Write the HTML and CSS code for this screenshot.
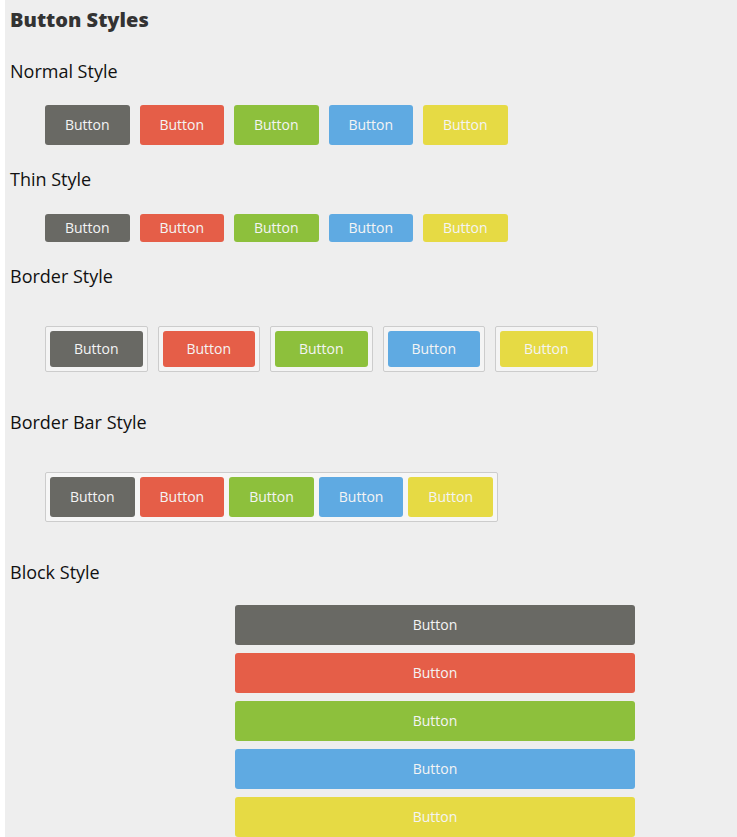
FILE: index.html
```html
<!DOCTYPE html>
<html>
<head>
<meta charset="utf-8">
<title>Button Styles</title>
<link rel="stylesheet" href="styles.css">
</head>
<body>
<div class="page">
  <h1 class="title">Button Styles</h1>

  <h2 class="section s-normal">Normal Style</h2>
  <div class="row row-normal">
    <a class="btn c-grey">Button</a>
    <a class="btn c-red">Button</a>
    <a class="btn c-green">Button</a>
    <a class="btn c-blue">Button</a>
    <a class="btn c-yellow">Button</a>
  </div>

  <h2 class="section s-thin">Thin Style</h2>
  <div class="row row-thin">
    <a class="btn thin c-grey">Button</a>
    <a class="btn thin c-red">Button</a>
    <a class="btn thin c-green">Button</a>
    <a class="btn thin c-blue">Button</a>
    <a class="btn thin c-yellow">Button</a>
  </div>

  <h2 class="section s-border">Border Style</h2>
  <div class="row row-border">
    <span class="frame"><a class="btn framed c-grey">Button</a></span>
    <span class="frame"><a class="btn framed c-red">Button</a></span>
    <span class="frame"><a class="btn framed c-green">Button</a></span>
    <span class="frame"><a class="btn framed c-blue">Button</a></span>
    <span class="frame"><a class="btn framed c-yellow">Button</a></span>
  </div>

  <h2 class="section s-bar">Border Bar Style</h2>
  <div class="bar">
    <a class="btn c-grey">Button</a>
    <a class="btn c-red">Button</a>
    <a class="btn c-green">Button</a>
    <a class="btn c-blue">Button</a>
    <a class="btn c-yellow">Button</a>
  </div>

  <h2 class="section s-block">Block Style</h2>
  <div class="blocks">
    <a class="btn block c-grey">Button</a>
    <a class="btn block c-red">Button</a>
    <a class="btn block c-green">Button</a>
    <a class="btn block c-blue">Button</a>
    <a class="btn block c-yellow">Button</a>
  </div>
</div>
</body>
</html>
```
FILE: styles.css
```css
html, body {
  margin: 0;
  padding: 0;
  background: #ffffff;
}

body {
  font-family: "Open Sans", "Liberation Sans", sans-serif;
}

.page {
  margin-left: 5px;
  padding: 7px 0 40px 5px;
  background: #eeeeee;
  min-height: 830px;
}

.title {
  margin: 0;
  font-size: 20px;
  line-height: 26px;
  font-weight: 800;
  color: #333333;
}

.section {
  margin: 0;
  font-size: 18px;
  line-height: 24px;
  font-weight: 400;
  color: #111111;
}

.s-normal { margin-top: 26px; }
.s-thin { margin-top: 22px; }
.s-border { margin-top: 22px; }
.s-bar { margin-top: 38px; }
.s-block { margin-top: 38px; }

.row {
  display: flex;
  margin-left: 35px;
}

.row-normal { margin-top: 22px; gap: 10px; }
.row-thin { margin-top: 23px; gap: 10px; }
.row-border { margin-top: 38px; gap: 10px; }

.btn {
  display: flex;
  align-items: center;
  justify-content: center;
  box-sizing: border-box;
  width: 84.5px;
  height: 40px;
  padding-bottom: 2px;
  border-radius: 3px;
  font-size: 14px;
  color: #f4f4f4;
  text-decoration: none;
}

.btn.thin { height: 28px; }

.frame {
  display: block;
  box-sizing: border-box;
  width: 102.5px;
  height: 46px;
  padding: 4px;
  border: 1px solid #cccccc;
  border-radius: 2px;
  background: #f4f4f4;
}

.btn.framed {
  width: 100%;
  height: 36px;
}

.bar {
  display: inline-flex;
  gap: 5px;
  margin: 38px 0 0 35px;
  padding: 4px;
  border: 1px solid #cccccc;
  border-radius: 2px;
  background: #f6f6f6;
}

.bar .btn { width: 84.6px; }

.blocks {
  display: flex;
  flex-direction: column;
  gap: 8px;
  width: 400px;
  margin: 21px 0 0 225px;
}

.btn.block { width: 400px; }

.c-grey { background: #696964; }
.c-red { background: #e55e48; }
.c-green { background: #8dc03c; }
.c-blue { background: #5faae2; }
.c-yellow { background: #e6da44; }
```
